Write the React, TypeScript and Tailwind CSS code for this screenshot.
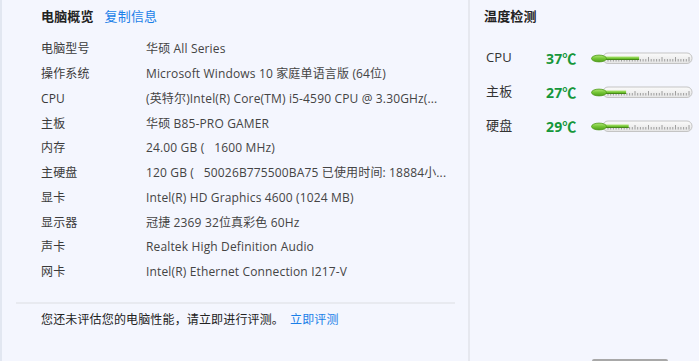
import React from "react";

const font = { fontFamily: '"Open Sans", "Noto Sans CJK SC", sans-serif' };

const specs: [string, string][] = [
  ["电脑型号", "华硕 All Series"],
  ["操作系统", "Microsoft Windows 10 家庭单语言版 (64位)"],
  ["CPU", "(英特尔)Intel(R) Core(TM) i5-4590 CPU @ 3.30GHz(..."],
  ["主板", "华硕 B85-PRO GAMER"],
  ["内存", "24.00 GB (   1600 MHz)"],
  ["主硬盘", "120 GB (   50026B775500BA75 已使用时间: 18884小..."],
  ["显卡", "Intel(R) HD Graphics 4600 (1024 MB)"],
  ["显示器", "冠捷 2369 32位真彩色 60Hz"],
  ["声卡", "Realtek High Definition Audio"],
  ["网卡", "Intel(R) Ethernet Connection I217-V"],
];

const temps = [
  { name: "CPU", value: 37 },
  { name: "主板", value: 27 },
  { name: "硬盘", value: 29 },
];

function Thermometer({ value }: { value: number }) {
  const fillW = 14 + (value - 20) * 1.3;
  const ticks = [];
  for (let i = 0; i < 31; i++) {
    const x = 17 + i * 2.7;
    const tall = i % 5 === 0;
    ticks.push(
      <line
        key={i}
        x1={x}
        x2={x}
        y1={tall ? 5 : 7}
        y2={9.5}
        stroke="#8a8a8a"
        strokeWidth={0.8}
      />
    );
  }
  return (
    <svg width="102" height="13" viewBox="0 0 102 13">
      <defs>
        <linearGradient id="tube" x1="0" y1="0" x2="0" y2="1">
          <stop offset="0" stopColor="#fbfbfb" />
          <stop offset="1" stopColor="#e4e4e4" />
        </linearGradient>
        <linearGradient id="grn" x1="0" y1="0" x2="0" y2="1">
          <stop offset="0" stopColor="#b0e676" />
          <stop offset="0.5" stopColor="#74c635" />
          <stop offset="1" stopColor="#529e1e" />
        </linearGradient>
      </defs>
      <rect x="12" y="1" width="89" height="10.5" rx="5" fill="url(#tube)" stroke="#c4c4c4" strokeWidth="1" />
      {ticks}
      <rect x="12" y="4.5" width={fillW} height="3.5" fill="url(#grn)" />
      <line x1="14" x2={12 + fillW} y1="7.5" y2="7.5" stroke="#3f7f14" strokeWidth="0.8" />
      <ellipse cx="8" cy="6.5" rx="7.5" ry="3.4" fill="url(#grn)" stroke="#4f9a1c" strokeWidth="0.8" />
    </svg>
  );
}

export default function App() {
  return (
    <div
      className="flex h-[361px] w-[699px] overflow-hidden bg-[#f4f6fe] text-[12px] tracking-[0.15px] text-[#333]"
      style={font}
    >
      {/* Left: overview */}
      <div className="flex w-[468px] shrink-0 flex-col border-l-2 border-[#e2e7f1]">
        <div className="mt-[7px] flex h-[20px] items-center gap-[11px] pl-[39px]">
          <span className="text-[13px] font-bold text-[#222]">电脑概览</span>
          <span className="text-[13px] text-[#1a7fe8]">复制信息</span>
        </div>
        <div className="mt-[10px] flex flex-col pl-[39px]">
          {specs.map(([k, v]) => (
            <div key={k} className="flex h-[24.75px] items-center">
              <span className="w-[105px] shrink-0 text-[#3a3a3a]">{k}</span>
              <span className="whitespace-pre text-[#444]">{v}</span>
            </div>
          ))}
        </div>
        <div className="ml-[14px] mr-[13px] mt-[17px] h-[2px] bg-[#e8eaf0]" />
        <div className="mt-[6px] flex h-[20px] items-center pl-[39px]">
          <span className="text-[#222]">您还未评估您的电脑性能，请立即进行评测。</span>
          <span className="ml-[6px] text-[#1a7fe8]">立即评测</span>
        </div>
      </div>

      {/* Divider */}
      <div className="w-[2px] shrink-0 bg-[#e6e8ef]" />

      {/* Right: temperature */}
      <div className="flex flex-1 flex-col">
        <div className="mt-[7px] flex h-[20px] items-center pl-[14px]">
          <span className="text-[13px] font-bold text-[#222]">温度检测</span>
        </div>
        <div className="mt-[21px] flex flex-col gap-[14px] pl-[16px]">
          {temps.map((t) => (
            <div key={t.name} className="flex h-[20px] items-center">
              <span className="w-[60px] shrink-0 text-[13px] text-[#333]">{t.name}</span>
              <span className="w-[45px] shrink-0 text-[14px] font-bold text-[#16973a]">
                {t.value}℃
              </span>
              <Thermometer value={t.value} />
            </div>
          ))}
        </div>
        <div className="mt-auto ml-[122px] h-[2px] w-[76px] rounded-t-sm bg-[#a8a8a8]" />
      </div>
    </div>
  );
}
